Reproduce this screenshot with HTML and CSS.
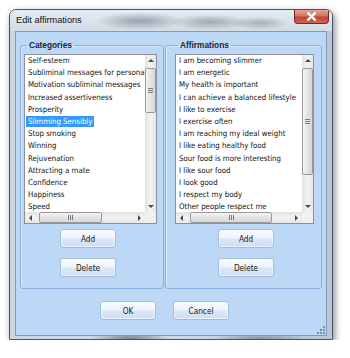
FILE: index.html
```html
<!DOCTYPE html>
<html>
<head>
    <title>Edit affirmations</title>
<link rel="stylesheet" href="styles.css">
</head>
<body>
    <div class="window">
        <div class="titlebar">
            <span class="title">Edit affirmations</span>
            <div class="close-btn">
                <svg width="11" height="9" viewBox="0 0 11 9"><path d="M2.2 1.3 L8.8 7.7 M8.8 1.3 L2.2 7.7" stroke="#fff" stroke-width="2.3" stroke-linecap="square"/></svg>
            </div>
        </div>

        <div class="client">
            <div class="groups">
                <fieldset class="group group-left">
                    <legend>Categories</legend>
                    <div class="listbox list-left">
                        <ul class="items">
                            <li><span>Self-esteem</span></li>
                            <li><span>Subliminal messages for personal development</span></li>
                            <li><span>Motivation subliminal messages</span></li>
                            <li><span>Increased assertiveness</span></li>
                            <li><span>Prosperity</span></li>
                            <li><span class="selected">Slimming Sensibly</span></li>
                            <li><span>Stop smoking</span></li>
                            <li><span>Winning</span></li>
                            <li><span>Rejuvenation</span></li>
                            <li><span>Attracting a mate</span></li>
                            <li><span>Confidence</span></li>
                            <li><span>Happiness</span></li>
                            <li><span>Speed</span></li>
                        </ul>
                        <div class="vscroll">
                            <div class="arrow"><i class="tri tri-up"></i></div>
                            <div class="track"><div class="thumb vthumb" style="height:45px"></div></div>
                            <div class="arrow"><i class="tri tri-down"></i></div>
                        </div>
                        <div class="hscroll">
                            <div class="arrow"><i class="tri tri-left"></i></div>
                            <div class="track"><div class="thumb hthumb" style="width:63px"></div></div>
                            <div class="arrow"><i class="tri tri-right"></i></div>
                        </div>
                        <div class="corner"></div>
                    </div>
                    <div class="group-buttons">
                        <button class="btn">Add</button>
                        <button class="btn">Delete</button>
                    </div>
                </fieldset>

                <fieldset class="group group-right">
                    <legend>Affirmations</legend>
                    <div class="listbox list-right">
                        <ul class="items">
                            <li><span>I am becoming slimmer</span></li>
                            <li><span>I am energetic</span></li>
                            <li><span>My health is important</span></li>
                            <li><span>I can achieve a balanced lifestyle</span></li>
                            <li><span>I like to exercise</span></li>
                            <li><span>I exercise often</span></li>
                            <li><span>I am reaching my ideal weight</span></li>
                            <li><span>I like eating healthy food</span></li>
                            <li><span>Sour food is more interesting</span></li>
                            <li><span>I like sour food</span></li>
                            <li><span>I look good</span></li>
                            <li><span>I respect my body</span></li>
                            <li><span>Other people respect me</span></li>
                        </ul>
                        <div class="vscroll">
                            <div class="arrow"><i class="tri tri-up"></i></div>
                            <div class="track"><div class="thumb vthumb" style="height:107px"></div></div>
                            <div class="arrow"><i class="tri tri-down"></i></div>
                        </div>
                        <div class="hscroll">
                            <div class="arrow"><i class="tri tri-left"></i></div>
                            <div class="track"><div class="thumb hthumb" style="width:82px"></div></div>
                            <div class="arrow"><i class="tri tri-right"></i></div>
                        </div>
                        <div class="corner"></div>
                    </div>
                    <div class="group-buttons">
                        <button class="btn">Add</button>
                        <button class="btn">Delete</button>
                    </div>
                </fieldset>
            </div>

            <div class="dialog-buttons">
                <button class="btn">OK</button>
                <button class="btn">Cancel</button>
            </div>

            <svg class="grip" width="9" height="9" viewBox="0 0 9 9">
                <rect x="7" y="1" width="2" height="2" fill="#7d8fa6"/>
                <rect x="4" y="4" width="2" height="2" fill="#7d8fa6"/>
                <rect x="7" y="4" width="2" height="2" fill="#7d8fa6"/>
                <rect x="1" y="7" width="2" height="2" fill="#7d8fa6"/>
                <rect x="4" y="7" width="2" height="2" fill="#7d8fa6"/>
                <rect x="7" y="7" width="2" height="2" fill="#7d8fa6"/>
            </svg>
        </div>
    </div>
</body>
</html>
```

FILE: styles.css
```css
body {
    margin: 0;
    background: #ffffff;
    font-family: "DejaVu Sans Condensed", "Liberation Sans", sans-serif;
}

.window {
    box-sizing: border-box;
    width: 324px;
    height: 331px;
    margin: 9px 0 0 9px;
    border: 1px solid #46566a;
    border-radius: 7px 7px 0 0;
    box-shadow: 2px 3px 7px rgba(0, 0, 0, 0.45);
    background:
        radial-gradient(ellipse 40px 8px at 120px 100%, rgba(40, 50, 60, 0.55), transparent),
        radial-gradient(ellipse 50px 6px at 250px 100%, rgba(40, 50, 60, 0.4), transparent),
        linear-gradient(90deg, #c9d6e3, #d3dde8 40%, #b9c7d6 100%);
    display: flex;
    flex-direction: column;
    overflow: hidden;
}

.titlebar {
    height: 21px;
    display: flex;
    align-items: flex-start;
    background:
        radial-gradient(ellipse 45px 9px at 130px 11px, rgba(70, 80, 95, 0.45), transparent),
        radial-gradient(ellipse 40px 8px at 200px 12px, rgba(70, 80, 95, 0.4), transparent),
        radial-gradient(ellipse 30px 7px at 250px 13px, rgba(70, 80, 95, 0.35), transparent),
        linear-gradient(#e6ecf2, #d2dce6);
}

.title {
    font-family: "Liberation Sans", sans-serif;
    font-size: 9.2px;
    color: #111;
    padding: 5px 0 0 6px;
}

.close-btn {
    margin-left: auto;
    margin-right: 3px;
    width: 35px;
    height: 14px;
    box-sizing: border-box;
    border: 1px solid #6e2a22;
    border-top: none;
    border-radius: 0 0 4px 4px;
    background: linear-gradient(#e4a194, #d27563 45%, #bf4530 55%, #cc6550);
    display: flex;
    align-items: center;
    justify-content: center;
}

.client {
    position: relative;
    box-sizing: border-box;
    height: 305px;
    margin: 0 5px;
    border: 1px solid #7f9cbf;
    background: #bdd7f6;
}

.groups {
    display: flex;
    margin: 8px 0 0 4px;
}

.group {
    box-sizing: border-box;
    margin: 0;
    height: 249px;
    padding: 4px 0 0 3px;
    border: 1px solid #8aaed9;
    border-radius: 3px;
    box-shadow: inset 1px 1px 0 rgba(255, 255, 255, 0.45);
}

.group legend {
    font-family: "Liberation Sans", sans-serif;
    font-weight: bold;
    font-size: 8.3px;
    line-height: 10px;
    color: #13233a;
    padding: 0 2px;
    margin-left: 3px;
}

.group-left {
    width: 144px;
}

.group-right {
    width: 157px;
    margin-left: 1px;
    padding-left: 9px;
}

.listbox {
    box-sizing: border-box;
    height: 170px;
    border: 1px solid #8c9098;
    background: #fff;
    display: grid;
    grid-template-columns: 1fr 11px;
    grid-template-rows: 1fr 11px;
}

.list-left {
    width: 133px;
}

.list-right {
    width: 139px;
}

.items {
    list-style: none;
    margin: 0;
    padding: 0 0 0 1px;
    overflow: hidden;
    white-space: nowrap;
    font-size: 7.8px;
    line-height: 12.2px;
    color: #111;
}

.items li {
    height: 12.2px;
}

.items span {
    padding: 0 2px;
    display: inline-block;
    line-height: 11px;
}

.items .selected {
    background: #3399ff;
    color: #fff;
}

.vscroll {
    display: flex;
    flex-direction: column;
    background: linear-gradient(90deg, #e3e3e3, #f2f2f2 50%, #e6e6e6);
}

.hscroll {
    display: flex;
    background: linear-gradient(#e3e3e3, #f2f2f2 50%, #e6e6e6);
}

.corner {
    background: #f0f0f0;
}

.arrow {
    width: 11px;
    height: 11px;
    flex: none;
    display: flex;
    align-items: center;
    justify-content: center;
}

.track {
    flex: 1;
    display: flex;
}

.vscroll .track {
    flex-direction: column;
}

.tri {
    width: 0;
    height: 0;
}

.tri-up {
    border-left: 3px solid transparent;
    border-right: 3px solid transparent;
    border-bottom: 3px solid #4a4a4a;
}

.tri-down {
    border-left: 3px solid transparent;
    border-right: 3px solid transparent;
    border-top: 3px solid #4a4a4a;
}

.tri-left {
    border-top: 3px solid transparent;
    border-bottom: 3px solid transparent;
    border-right: 3px solid #4a4a4a;
}

.tri-right {
    border-top: 3px solid transparent;
    border-bottom: 3px solid transparent;
    border-left: 3px solid #4a4a4a;
}

.thumb {
    box-sizing: border-box;
    border: 1px solid #9a9a9a;
    border-radius: 2px;
    display: flex;
    align-items: center;
    justify-content: center;
}

.vthumb {
    margin: 2px 0 0 0;
    width: 11px;
    background: linear-gradient(90deg, #f4f4f4, #e4e4e4 50%, #d6d6d6);
}

.vthumb::after {
    content: "";
    width: 5px;
    height: 5px;
    background: repeating-linear-gradient(#7a7a7a 0, #7a7a7a 1px, transparent 1px, transparent 2px);
}

.hthumb {
    margin: 0 0 0 3px;
    height: 11px;
    background: linear-gradient(#f4f4f4, #e4e4e4 50%, #d6d6d6);
}

.hthumb::after {
    content: "";
    width: 5px;
    height: 5px;
    background: repeating-linear-gradient(90deg, #7a7a7a 0, #7a7a7a 1px, transparent 1px, transparent 2px);
}

.group-buttons {
    display: flex;
    flex-direction: column;
    gap: 10px;
    margin-top: 5px;
}

.group-left .group-buttons {
    padding-left: 36px;
}

.group-right .group-buttons {
    padding-left: 43px;
}

.btn {
    box-sizing: border-box;
    width: 56px;
    height: 19px;
    padding: 0;
    font-family: "DejaVu Sans Condensed", "Liberation Sans", sans-serif;
    font-size: 8.2px;
    color: #1a1a1a;
    border: 1px solid #a4bcd9;
    border-radius: 3px;
    background: linear-gradient(#f8fbff, #eef4fc 48%, #d9e6f6 52%, #cfdff4);
    box-shadow: inset 0 0 0 1px rgba(255, 255, 255, 0.6);
}

.dialog-buttons {
    display: flex;
    gap: 17px;
    margin-top: 12px;
    padding-left: 84px;
}

.grip {
    position: absolute;
    right: 1px;
    bottom: 1px;
}
```
